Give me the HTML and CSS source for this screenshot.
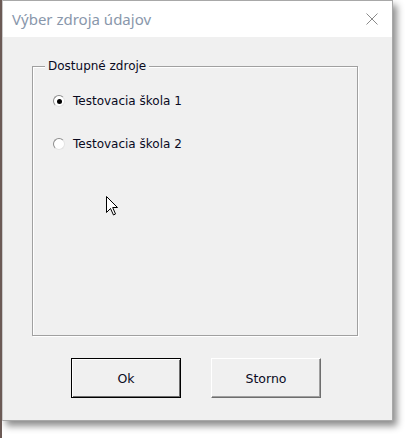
FILE: index.html
```html
<!DOCTYPE html>
<html lang="sk">
<head>
<meta charset="utf-8">
<title>Výber zdroja údajov</title>
<link rel="stylesheet" href="styles.css">
</head>
<body>
<div class="window">
  <div class="titlebar">
    <span class="title">Výber zdroja údajov</span>
    <svg class="close" width="12" height="12" viewBox="0 0 12 12"><path d="M0.5 0.5 L11.5 11.5 M11.5 0.5 L0.5 11.5" stroke="#8a8a8a" stroke-width="1" fill="none"/></svg>
  </div>
  <div class="client">
    <fieldset class="group">
      <legend class="legend">Dostupné zdroje</legend>
      <label class="option"><span class="radio checked"></span>Testovacia škola 1</label>
      <label class="option"><span class="radio"></span>Testovacia škola 2</label>
    </fieldset>
    <div class="buttons">
      <button class="btn default">Ok</button>
      <button class="btn">Storno</button>
    </div>
    <svg class="cursor" width="13" height="20" viewBox="0 0 13 20"><path d="M0.5 0.5 L0.5 16.5 L4.5 12.5 L7.5 19 L9.5 18 L6.7 11.5 L11.5 11.5 Z" fill="#fff" stroke="#000" stroke-width="1" stroke-linejoin="miter"/></svg>
  </div>
</div>
</body>
</html>
```
FILE: styles.css
```css
html, body {
  margin: 0;
  padding: 0;
  background: #ffffff;
}
body {
  width: 409px;
  height: 438px;
  overflow: hidden;
  border-left: 2px solid #6b5a55;
  box-sizing: border-box;
}
.window {
  width: 391px;
  height: 421px;
  box-sizing: border-box;
  border: 1px solid #a8a8a8;
  border-left-color: #c9c9c9;
  background: #f0f0f0;
  box-shadow: 4px 5px 7px rgba(0, 0, 0, 0.45);
  display: flex;
  flex-direction: column;
  font-family: "DejaVu Sans", sans-serif;
  font-size: 12px;
  color: #000;
}
.titlebar {
  height: 36px;
  background: #ffffff;
  display: flex;
  align-items: center;
  justify-content: space-between;
  padding: 0 14px 0 9px;
  flex-shrink: 0;
}
.title {
  font-family: "Noto Sans", sans-serif;
  font-size: 15px;
  color: #8997ab;
}
.close {
  display: block;
}
.client {
  flex: 1;
  position: relative;
  padding: 22px 0 0 29px;
  display: flex;
  flex-direction: column;
}
.group {
  margin: 0;
  width: 326px;
  height: 277px;
  box-sizing: border-box;
  border: 1px solid #a0a0a0;
  box-shadow: 1px 1px 0 #ffffff, inset 1px 1px 0 #ffffff;
  padding: 19px 0 0 0;
  display: flex;
  flex-direction: column;
  gap: 25px;
}
.legend {
  padding: 0 3px;
  margin-left: 12px;
  background: #f0f0f0;
  color: #0a0a1e;
  font-size: 12px;
  line-height: 14px;
}
.option {
  display: flex;
  align-items: center;
  gap: 8px;
  height: 18px;
  margin-left: 20px;
  color: #0a0a1e;
}
.radio {
  width: 12px;
  height: 12px;
  box-sizing: border-box;
  border-radius: 50%;
  background: #ffffff;
  border: 1px solid #8c8c8c;
  border-right-color: #e3e3e3;
  border-bottom-color: #e3e3e3;
  position: relative;
  flex-shrink: 0;
}
.radio.checked::after {
  content: "";
  position: absolute;
  left: 2.5px;
  top: 2.5px;
  width: 5px;
  height: 5px;
  border-radius: 50%;
  background: #000;
}
.buttons {
  display: flex;
  gap: 30px;
  margin: 22px 0 0 39px;
}
.btn {
  width: 110px;
  height: 40px;
  box-sizing: border-box;
  background: #f0f0f0;
  font-family: "DejaVu Sans", sans-serif;
  font-size: 12.5px;
  color: #0a0a1e;
  padding: 0;
  border: 1px solid;
  border-color: #ffffff #6e6e6e #6e6e6e #ffffff;
  box-shadow: inset -1px -1px 0 #a0a0a0;
}
.btn.default {
  border: 1px solid #000000;
  box-shadow: inset 1px 1px 0 #ffffff, inset -1px -1px 0 #6e6e6e;
}
.cursor {
  position: absolute;
  left: 103px;
  top: 159px;
}
```
